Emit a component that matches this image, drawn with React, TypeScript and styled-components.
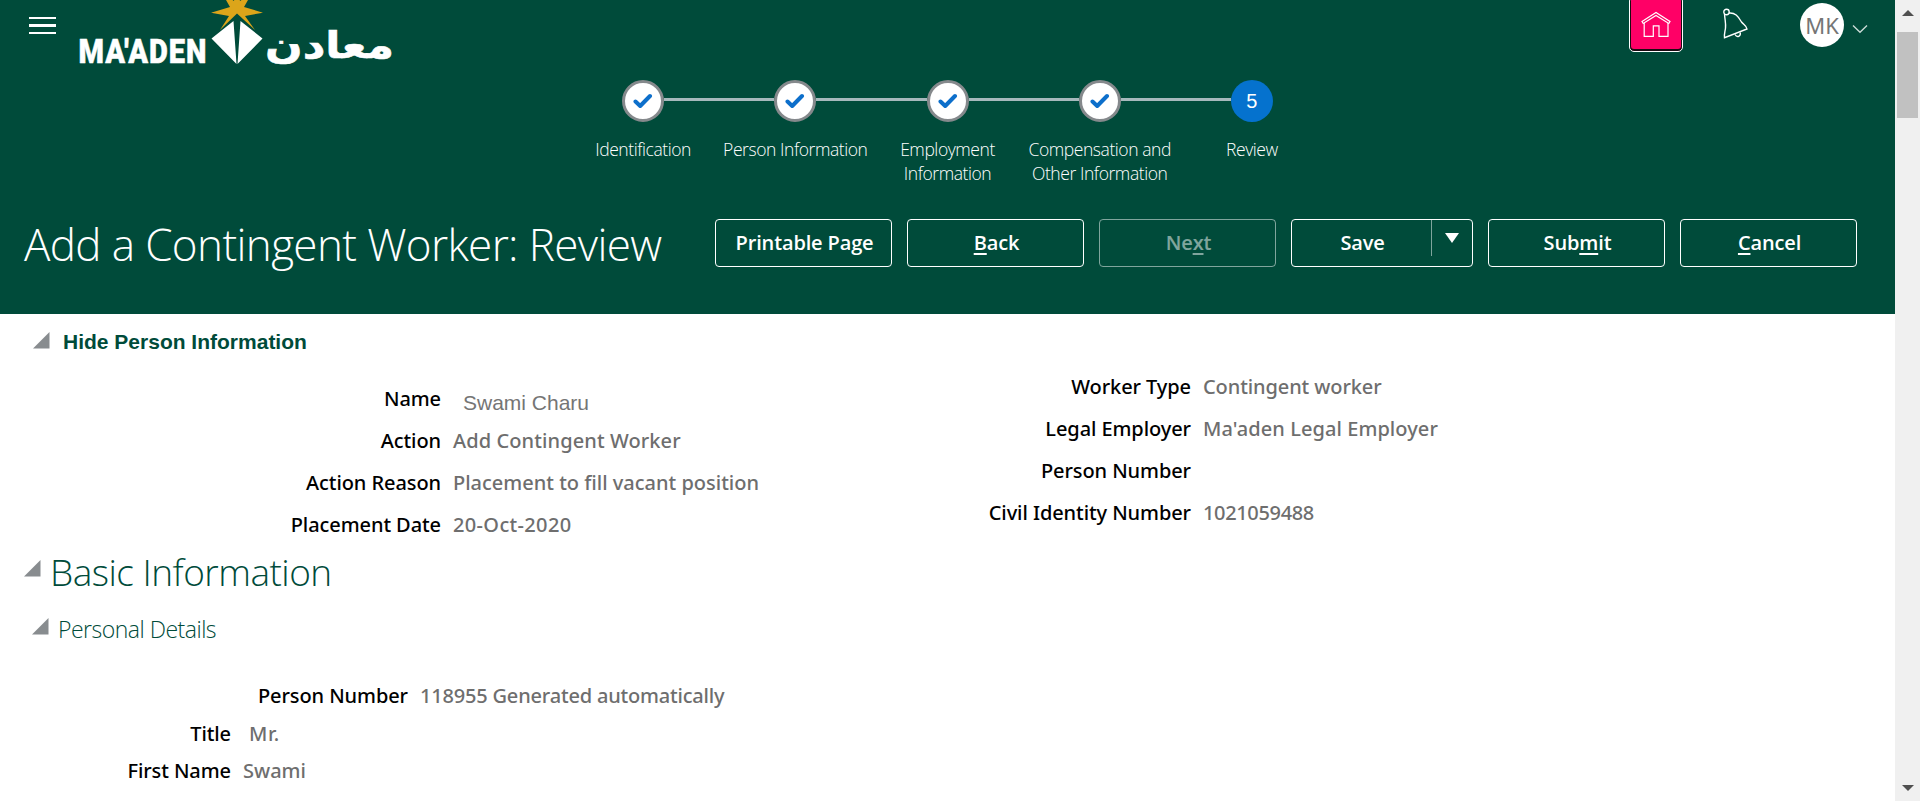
import React from 'react';
import styled, { createGlobalStyle } from 'styled-components';

const GREEN = '#004b3a';
const LIGHT = '"Open Sans", "Noto Sans", sans-serif';
const TEXT = '"Noto Sans", "Open Sans", sans-serif';

const GlobalStyle = createGlobalStyle`
  * { box-sizing: border-box; }
  body { margin: 0; background: #fff; font-family: ${TEXT}; overflow: hidden; }
`;

const Page = styled.div`
  display: flex;
  width: 1920px;
  height: 801px;
  overflow: hidden;
`;
const Content = styled.main`
  width: 1895px;
  height: 801px;
  overflow: hidden;
`;

/* Header */
const Header = styled.header`
  height: 314px;
  background: ${GREEN};
  color: #fff;
`;
const TopBar = styled.div`
  display: flex;
  align-items: flex-start;
  height: 80px;
  padding-left: 29px;
`;
const MenuButton = styled.div`
  display: flex;
  flex-direction: column;
  gap: 5px;
  width: 27px;
  margin-top: 17px;
`;
const MenuBar = styled.span`
  height: 2.4px;
  background: #fff;
`;
const Logo = styled.svg`
  width: 320px;
  height: 70px;
  margin-left: 20px;
`;
const TopActions = styled.div`
  display: flex;
  align-items: flex-start;
  margin-left: auto;
  padding-right: 27px;
`;
const HomeButton = styled.div`
  width: 54px;
  height: 56px;
  margin-top: -4px;
  padding: 1px;
  border: 1px solid #fff;
  border-radius: 5px;
  background: #1c0a12;
`;
const HomeFace = styled.div`
  display: flex;
  height: 51px;
  background: #ff0066;
  border-radius: 3px;
`;
const HomeIcon = styled.svg`
  width: 30px;
  height: 28px;
  margin: 12px 0 0 10px;
`;
const BellIcon = styled.svg`
  width: 28px;
  height: 32px;
  margin: 8px 0 0 38px;
`;
const Avatar = styled.div`
  width: 44px;
  height: 44px;
  margin: 3px 0 0 51px;
  border-radius: 50%;
  background: #fff;
  color: #757575;
  font: 400 22px/44px ${TEXT};
  text-align: center;
`;
const Chevron = styled.svg`
  width: 16px;
  height: 10px;
  margin: 24px 0 0 8px;
`;

const Stepper = styled.ol`
  display: flex;
  height: 134px;
  width: 761px;
  margin: 0 0 0 567px;
  padding: 0;
  list-style: none;
`;
const Step = styled.li`
  flex: 1;
`;
const StepTrack = styled.div`
  display: flex;
  justify-content: center;
`;
const StepLine = styled.span<{ $hidden?: boolean }>`
  flex: 1;
  height: 3px;
  margin-top: 18px;
  background: ${(p) => (p.$hidden ? 'transparent' : '#a6b9bc')};
`;
const StepCircle = styled.span<{ $current?: boolean }>`
  display: flex;
  align-items: center;
  justify-content: center;
  width: 42px;
  height: 42px;
  border-radius: 50%;
  border: ${(p) => (p.$current ? '0' : '3px solid #85898c')};
  background: ${(p) => (p.$current ? '#0572ce' : '#fff')};
  color: #fff;
  font: 400 20px/42px "Liberation Sans", sans-serif;
`;
const StepLabel = styled.div`
  margin-top: 15px;
  font: 300 17.5px/24px ${LIGHT};
  letter-spacing: -0.43px;
  text-align: center;
  white-space: pre-line;
`;

const TitleRow = styled.div`
  display: flex;
  align-items: flex-start;
  padding: 0 38px 0 24px;
`;
const Title = styled.h1`
  margin: 0;
  font: 300 44px/60px ${LIGHT};
  letter-spacing: -0.63px;
  white-space: nowrap;
`;
const Buttons = styled.div`
  display: flex;
  gap: 15px;
  margin: 5px 0 0 auto;
`;
const Button = styled.div<{ $disabled?: boolean; $w?: number }>`
  display: flex;
  justify-content: center;
  width: ${(p) => p.$w ?? 177}px;
  height: 48px;
  padding-left: 2px;
  border: 1px solid #fff;
  border-radius: 4px;
  font: 600 20px/46px ${LIGHT};
  letter-spacing: -0.15px;
  opacity: ${(p) => (p.$disabled ? 0.5 : 1)};
`;
const AccessKey = styled.span`
  text-decoration: underline;
  text-decoration-thickness: 2px;
  text-underline-offset: 3px;
  text-decoration-skip-ink: none;
`;
const SplitLabel = styled.span`
  flex: 1;
  text-align: center;
`;
const SplitArrow = styled.span`
  display: flex;
  justify-content: center;
  width: 41px;
  height: 36px;
  padding: 13px 0 0 0;
  border-left: 1px solid #7fa59c;
`;

/* Body */
const Disclosure = styled.div<{ $left: number; $gap: number; $arrowTop: number }>`
  display: flex;
  align-items: flex-start;
  gap: ${(p) => p.$gap}px;
  padding-left: ${(p) => p.$left}px;
  color: ${GREEN};
  > svg { margin-top: ${(p) => p.$arrowTop}px; flex: none; }
`;
const ToggleText = styled.span`
  font: bold 21px/24px "Liberation Sans", Arial, sans-serif;
`;
const SectionTitle = styled.h2`
  margin: 0;
  font: 300 37px/50px ${LIGHT};
  letter-spacing: -0.52px;
`;
const SubsectionTitle = styled.h3`
  margin: 0;
  font: 300 23px/32px ${LIGHT};
  letter-spacing: -0.5px;
`;
const PersonPanel = styled.section`
  padding-top: 16px;
`;
const PersonColumns = styled.div`
  display: flex;
  height: 183px;
  padding-top: 12px;
`;
const FieldColumn = styled.div<{ $w: number; $top?: number }>`
  width: ${(p) => p.$w}px;
  padding-top: ${(p) => p.$top ?? 0}px;
`;
const Field = styled.div<{ $label: number; $h?: number }>`
  display: grid;
  grid-template-columns: ${(p) => p.$label}px 1fr;
  column-gap: 12px;
  height: ${(p) => p.$h ?? 42}px;
  font: 500 20px/${(p) => p.$h ?? 42}px ${TEXT};
  white-space: nowrap;
`;
const Label = styled.span`
  color: #000;
  letter-spacing: -0.08px;
  text-align: right;
`;
const Value = styled.span<{ $indent?: number; $track?: number }>`
  padding-left: ${(p) => p.$indent ?? 0}px;
  letter-spacing: ${(p) => p.$track ?? 0}px;
  color: #6e6e6e;
`;
const PlainValue = styled.span`
  padding: 4px 0 0 10px;
  color: #757575;
  font: 21px/42px "Liberation Sans", Arial, sans-serif;
`;
const BasicSection = styled.section`
  margin-top: 10px;
`;
const Subsection = styled.div`
  margin-top: 16px;
`;
const Details = styled.div`
  margin-top: 32px;
`;

/* Scrollbar */
const Scrollbar = styled.aside`
  display: flex;
  flex-direction: column;
  align-items: center;
  width: 25px;
  height: 801px;
  padding: 10px 0;
  background: #f0f0f0;
`;
const Thumb = styled.div`
  width: 21px;
  height: 86px;
  margin-top: 16px;
  background: #c1c1c1;
`;
const ScrollArrow = styled.svg<{ $end?: boolean }>`
  width: 12px;
  height: 6px;
  margin-top: ${(p) => (p.$end ? 'auto' : '0')};
`;

const Corner = () => (
  <svg width="17" height="17" viewBox="0 0 17 17">
    <path d="M16.5 0V16.5H0Z" fill="#888c8f" />
  </svg>
);

const Check = () => (
  <svg width="20" height="16" viewBox="0 0 20 16">
    <path d="M2.5 8.5L7.2 13L17 3" fill="none" stroke="#0d6fcb" strokeWidth="4" strokeLinecap="round" strokeLinejoin="round" />
  </svg>
);

const STEPS = [
  'Identification',
  'Person Information',
  'Employment\nInformation',
  'Compensation and\nOther Information',
  'Review',
];

type Entry = { label: string; value: string; plain?: boolean; track?: number };

const LEFT: Entry[] = [
  { label: 'Name', value: 'Swami Charu', plain: true },
  { label: 'Action', value: 'Add Contingent Worker', track: 0.1 },
  { label: 'Action Reason', value: 'Placement to fill vacant position' },
  { label: 'Placement Date', value: '20-Oct-2020', track: 0.35 },
];
const RIGHT: Entry[] = [
  { label: 'Worker Type', value: 'Contingent worker', track: -0.1 },
  { label: 'Legal Employer', value: "Ma'aden Legal Employer", track: 0.07 },
  { label: 'Person Number', value: '' },
  { label: 'Civil Identity Number', value: '1021059488', track: -0.35 },
];

const Entries = ({ items, label }: { items: Entry[]; label: number }) => (
  <>
    {items.map((e) => (
      <Field key={e.label} $label={label}>
        <Label>{e.label}</Label>
        {e.plain ? <PlainValue>{e.value}</PlainValue> : <Value $track={e.track}>{e.value}</Value>}
      </Field>
    ))}
  </>
);

export default function App() {
  return (
    <Page>
      <GlobalStyle />
      <Content>
        <Header>
          <TopBar>
            <MenuButton>
              <MenuBar />
              <MenuBar />
              <MenuBar />
            </MenuButton>
            <Logo viewBox="76 0 320 70">
              <path
                d="M237 -13L240 1L252 -7L244 7L263 12.7L245 16L255 30L237 13.5L220 30L229 16L211 12.7L230 7L222 -7L234 1Z"
                fill="#dca51a"
              />
              <path d="M233.5 21L211.5 38.5L236.5 64Z M240.5 21L262.5 38.5L237.5 64Z" fill="#fff" />
              <text x="78.5" y="62.5" textLength="129" lengthAdjust="spacingAndGlyphs" letterSpacing="1.2" fill="#fff" stroke="#fff" strokeWidth="0.5" fontFamily="Roboto, sans-serif" fontWeight="900" fontSize="34">
                MA'ADEN
              </text>
              <text x="265" y="58" textLength="129" lengthAdjust="spacingAndGlyphs" fill="#fff" stroke="#fff" strokeWidth="0.6" fontFamily="'DejaVu Sans', sans-serif" fontWeight="700" fontSize="37">
                معادن
              </text>
            </Logo>
            <TopActions>
              <HomeButton>
                <HomeFace>
                  <HomeIcon viewBox="0 0 30 28" fill="none" stroke="#fff" strokeWidth="1.2">
                    <path d="M1 11.5L15 2.5L29 11.5L27.8 13.5L15 5.5L2.2 13.5Z" />
                    <path d="M3.2 13V26.3H12.3V15.8H18V26.3H27V13" />
                  </HomeIcon>
                </HomeFace>
              </HomeButton>
              <BellIcon viewBox="0 0 28 32" fill="none" stroke="#fff" strokeWidth="1.4">
                <circle cx="5.5" cy="4" r="2.7" />
                <path d="M3.5 6C4 13 5 15 4.5 20C4 24 3 26 3.5 29.7L26 21C25.5 17.5 23 17 20.5 14C17 8 14 4.5 8 5" />
                <path d="M14 26.5C16 30 20 28.5 19.2 24.5" />
              </BellIcon>
              <Avatar>MK</Avatar>
              <Chevron viewBox="0 0 16 10" fill="none" stroke="#c9dbd6" strokeWidth="1.4">
                <path d="M1 1.5L8 8.2L15 1.5" />
              </Chevron>
            </TopActions>
          </TopBar>
          <Stepper>
            {STEPS.map((s, i) => (
              <Step key={s}>
                <StepTrack>
                  <StepLine $hidden={i === 0} />
                  <StepCircle $current={i === 4}>{i === 4 ? '5' : <Check />}</StepCircle>
                  <StepLine $hidden={i === 4} />
                </StepTrack>
                <StepLabel>{s}</StepLabel>
              </Step>
            ))}
          </Stepper>
          <TitleRow>
            <Title>Add a Contingent Worker: Review</Title>
            <Buttons>
              <Button>Printable Page</Button>
              <Button><AccessKey>B</AccessKey>ack</Button>
              <Button $disabled>Ne<AccessKey>x</AccessKey>t</Button>
              <Button $w={182}>
                <SplitLabel>Save</SplitLabel>
                <SplitArrow>
                  <svg width="14" height="10" viewBox="0 0 14 10">
                    <path d="M0 0H14L7 10Z" fill="#fff" />
                  </svg>
                </SplitArrow>
              </Button>
              <Button>Sub<AccessKey>m</AccessKey>it</Button>
              <Button><AccessKey>C</AccessKey>ancel</Button>
            </Buttons>
          </TitleRow>
        </Header>

        <PersonPanel>
          <Disclosure $left={33} $gap={13} $arrowTop={2}>
            <Corner />
            <ToggleText>Hide Person Information</ToggleText>
          </Disclosure>
          <PersonColumns>
            <FieldColumn $w={960} $top={12}>
              <Entries items={LEFT} label={441} />
            </FieldColumn>
            <FieldColumn $w={900}>
              <Entries items={RIGHT} label={231} />
            </FieldColumn>
          </PersonColumns>
        </PersonPanel>

        <BasicSection>
          <Disclosure $left={24} $gap={9} $arrowTop={13}>
            <Corner />
            <SectionTitle>Basic Information</SectionTitle>
          </Disclosure>
          <Subsection>
            <Disclosure $left={32} $gap={9} $arrowTop={5}>
              <Corner />
              <SubsectionTitle>Personal Details</SubsectionTitle>
            </Disclosure>
            <Details>
              <Field $label={408} $h={37.5}>
                <Label>Person Number</Label>
                <Value $track={-0.19}>118955 Generated automatically</Value>
              </Field>
              <Field $label={231} $h={37.5}>
                <Label>Title</Label>
                <Value $indent={6} $track={0.6}>Mr.</Value>
              </Field>
              <Field $label={231} $h={37.5}>
                <Label>First Name</Label>
                <Value>Swami</Value>
              </Field>
            </Details>
          </Subsection>
        </BasicSection>
      </Content>
      <Scrollbar>
        <ScrollArrow viewBox="0 0 12 6"><path d="M0 6L6 0L12 6Z" fill="#505050" /></ScrollArrow>
        <Thumb />
        <ScrollArrow $end viewBox="0 0 12 6"><path d="M0 0L6 6L12 0Z" fill="#505050" /></ScrollArrow>
      </Scrollbar>
    </Page>
  );
}
